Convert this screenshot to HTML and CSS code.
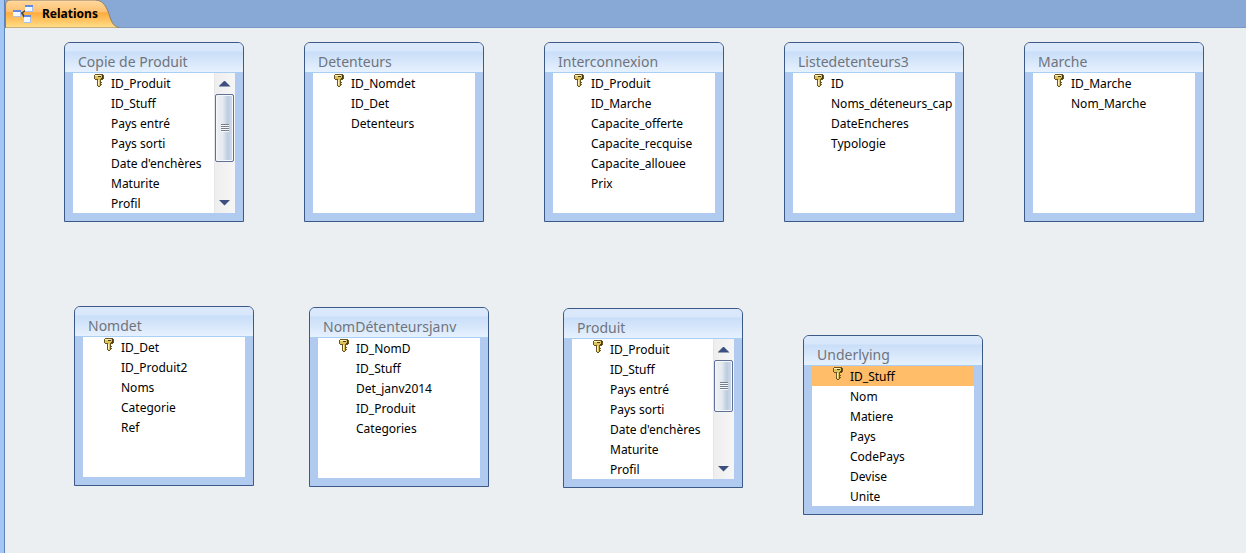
FILE: index.html
```html
<!DOCTYPE html>
<html lang="fr">
<head>
<meta charset="utf-8">
<title>Relations</title>
<link rel="stylesheet" href="styles.css">
</head>
<body>
<svg class="defs" aria-hidden="true">
  <defs>
    <linearGradient id="tab-fill" x1="0" y1="0" x2="0" y2="1">
      <stop offset="0" stop-color="#ffd9a0"/><stop offset=".42" stop-color="#ffc170"/>
      <stop offset=".46" stop-color="#ffab3f"/><stop offset="1" stop-color="#ffe08a"/>
    </linearGradient>
    <symbol id="key" viewBox="0 0 10 14">
      <path d="M1 0h8v1h1v4H9v1H7v2h1v1H7v1h1v1H7v1H6v1H4v-1H3V6H1V5H0V1h1z" fill="#6b5422"/>
      <path d="M1 1h7v3H7v1H1zM4 5h2v7H4z" fill="#dcc35a"/>
      <path d="M1 1h6v1H1zM4 6h1v5H4z" fill="#fff6b4"/>
      <path d="M4 2h3v1H4zM8 1h1v4H7V4h1z" fill="#4d3b18"/>
    </symbol>
  </defs>
</svg>
<div class="window">
  <header class="tabs" role="tablist">
    <button class="tab" role="tab" aria-selected="true">
      <svg class="tab-shape" viewBox="0 0 114 28" aria-hidden="true"><path d="M.5 28V5Q.5 0 6 0H90C101 0 103 12 106 20Q109 27 114 27.500V28z" fill="url(#tab-fill)" stroke="#8c7f6c"/></svg>
      <svg class="tab-icon" viewBox="0 0 20 18" aria-hidden="true">
        <path d="M7 8h3M9 8l4-3M9 8l3 5" fill="none" stroke="#444" stroke-width="1.500"/>
        <path d="M0 5h8v7H0zM12 0h8v7h-8zM11 10h7v8h-7z" fill="#a9c0ea"/>
        <path d="M0 7h7v4H0zM12 2h7v4h-7zM11 12h6v5h-6z" fill="#f4f8ff"/>
        <path d="M0 5h8v2H0zM12 0h8v2h-8zM11 10h7v2h-7z" fill="#5f8ae0"/>
      </svg>
      <span class="tab-label">Relations</span>
    </button>
  </header>
  <main class="canvas">
    <section class="table t1"><h2>Copie de Produit</h2><div class="body"><ul><li><svg class="key"><use href="#key"/></svg>ID_Produit</li><li>ID_Stuff</li><li>Pays entré</li><li>Pays sorti</li><li>Date d'enchères</li><li>Maturite</li><li>Profil</li></ul><div class="scroll"><button class="up" aria-label="Monter"></button><div class="thumb long"></div><button class="down" aria-label="Descendre"></button></div></div></section>
    <section class="table t2"><h2>Detenteurs</h2><div class="body"><ul><li><svg class="key"><use href="#key"/></svg>ID_Nomdet</li><li>ID_Det</li><li>Detenteurs</li></ul></div></section>
    <section class="table t3"><h2>Interconnexion</h2><div class="body"><ul><li><svg class="key"><use href="#key"/></svg>ID_Produit</li><li>ID_Marche</li><li>Capacite_offerte</li><li>Capacite_recquise</li><li>Capacite_allouee</li><li>Prix</li></ul></div></section>
    <section class="table t4"><h2>Listedetenteurs3</h2><div class="body"><ul><li><svg class="key"><use href="#key"/></svg>ID</li><li>Noms_déteneurs_cap</li><li>DateEncheres</li><li>Typologie</li></ul></div></section>
    <section class="table t5"><h2>Marche</h2><div class="body"><ul><li><svg class="key"><use href="#key"/></svg>ID_Marche</li><li>Nom_Marche</li></ul></div></section>
    <section class="table t6"><h2>Nomdet</h2><div class="body"><ul><li><svg class="key"><use href="#key"/></svg>ID_Det</li><li>ID_Produit2</li><li>Noms</li><li>Categorie</li><li>Ref</li></ul></div></section>
    <section class="table t7"><h2>NomDétenteursjanv</h2><div class="body"><ul><li><svg class="key"><use href="#key"/></svg>ID_NomD</li><li>ID_Stuff</li><li>Det_janv2014</li><li>ID_Produit</li><li>Categories</li></ul></div></section>
    <section class="table t8"><h2>Produit</h2><div class="body"><ul><li><svg class="key"><use href="#key"/></svg>ID_Produit</li><li>ID_Stuff</li><li>Pays entré</li><li>Pays sorti</li><li>Date d'enchères</li><li>Maturite</li><li>Profil</li></ul><div class="scroll"><button class="up" aria-label="Monter"></button><div class="thumb"></div><button class="down" aria-label="Descendre"></button></div></div></section>
    <section class="table t9"><h2>Underlying</h2><div class="body"><ul><li class="selected"><svg class="key"><use href="#key"/></svg>ID_Stuff</li><li>Nom</li><li>Matiere</li><li>Pays</li><li>CodePays</li><li>Devise</li><li>Unite</li></ul></div></section>
  </main>
</div>
</body>
</html>
```
FILE: styles.css
```css
* { box-sizing: border-box; }
body { margin: 0; font: 12px/20px "Noto Sans", "Open Sans", sans-serif; color: #000; background: #ebeff2; }
button { margin: 0; padding: 0; border: 0; background: none; font: inherit; color: inherit; }
ul, h2 { margin: 0; padding: 0; list-style: none; }
.defs { position: absolute; width: 0; height: 0; }
.window { display: flex; flex-direction: column; min-height: 100vh; border-left: 4px solid #a3c7f5; }
.tabs { display: flex; height: 28px; background: #88a8d6; border-left: 1px solid #5f84ba; border-bottom: 1px solid #7d98c2; }
.tab { position: relative; display: flex; align-items: center; gap: 9px; width: 114px; height: 28px; padding: 0 0 1px 8px; font-weight: 700; }
.tab-shape { position: absolute; inset: 0; width: 114px; height: 28px; }
.tab-icon { position: relative; width: 20px; height: 18px; }
.tab-label { position: relative; }
.canvas { position: relative; flex: 1; border-left: 1px solid #5f84ba; overflow: hidden; }
.table { position: absolute; width: 180px; background: #b1caf0; border: 1px solid #3b5a87; border-radius: 6px 6px 0 0; padding-bottom: 8px; overflow: hidden; }
.table h2 { height: 30px; padding: 5px 13px 0; border-bottom: 1px solid #a9cff5; background: linear-gradient(#dce9fb 0, #d8e7fb 8px, #c9def8 9px, #e6f1fe 29px); font-size: 14px; font-weight: 400; line-height: 28px; color: #70747c; white-space: nowrap; }
.body { display: flex; height: 140px; margin: 0 8px; background: #fff; }
.body ul { flex: 1; min-width: 0; overflow: hidden; }
.body li { position: relative; height: 20px; padding-left: 38px; line-height: 22px; white-space: nowrap; }
.selected { background: #ffbd69; }
.key { position: absolute; left: 21px; top: 1px; width: 10px; height: 14px; }
.scroll { display: flex; flex-direction: column; width: 21px; padding-right: 1px; border-left: 1px solid #e6e6e6; background: linear-gradient(90deg, #eee, #f6f6f6); }
.up, .down { flex: none; display: flex; align-items: center; justify-content: center; height: 21px; }
.up::before, .down::before { content: ""; width: 12px; height: 6px; background: #3d4f80; clip-path: polygon(50% 0, 100% 100%, 0 100%); }
.down { margin-top: auto; }
.down::before { clip-path: polygon(0 0, 100% 0, 50% 100%); }
.thumb { display: flex; align-items: center; justify-content: center; height: 52px; border: 1px solid #5f7099; border-radius: 2px; box-shadow: inset 0 0 0 1px #f4f7fb; background: linear-gradient(90deg, #eef1f5 0, #e5eaf0 40%, #bccbdf 70%, #d5dfec 100%); }
.thumb.long { height: 68px; }
.thumb::before { content: ""; width: 8px; height: 8px; background: repeating-linear-gradient(#777f8c 0 1px, #f5f7fa 1px 2px); }
.t1 { left: 59px; top: 14px; }
.t2 { left: 299px; top: 14px; }
.t3 { left: 539px; top: 14px; }
.t4 { left: 779px; top: 14px; }
.t5 { left: 1019px; top: 14px; }
.t6 { left: 69px; top: 278px; }
.t7 { left: 304px; top: 279px; }
.t8 { left: 558px; top: 280px; }
.t9 { left: 798px; top: 307px; }
```
